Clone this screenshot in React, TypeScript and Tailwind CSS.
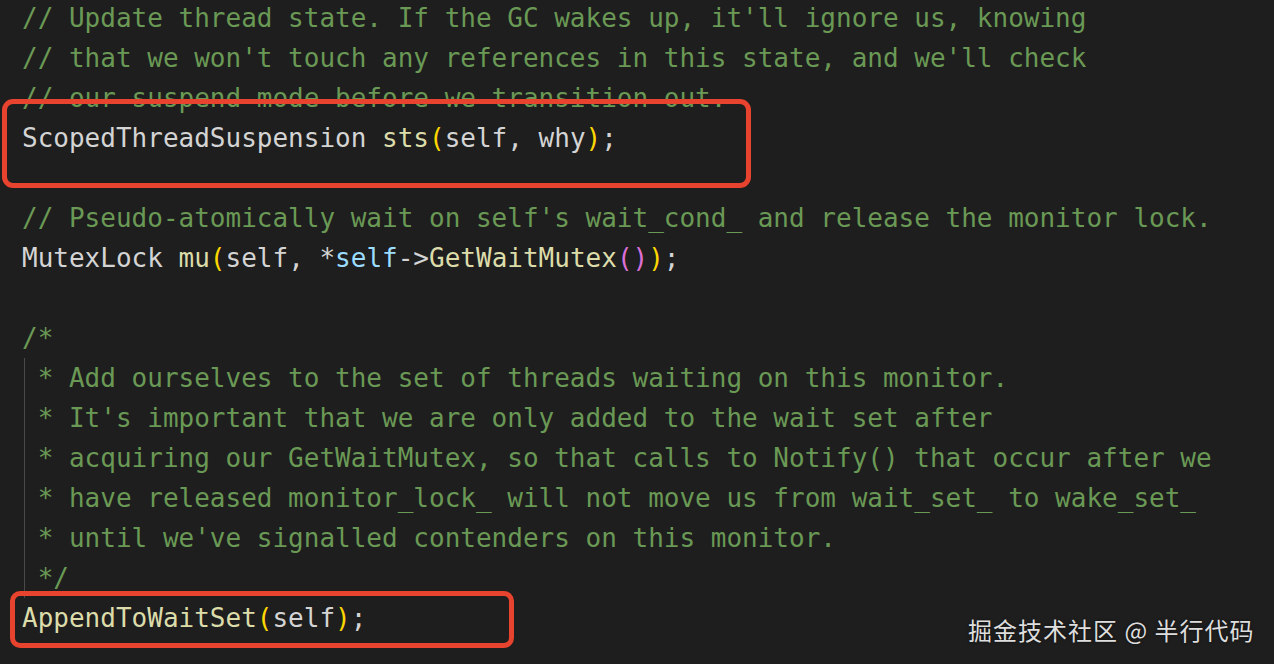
type Tok = { t: string; c?: string };

const GRAY = 'text-[#d4d4d4]';
const CMT = 'text-[#6a9955]';
const FN = 'text-[#dcdcaa]';
const GOLD = 'text-[#ffd700]';
const PURPLE = 'text-[#da70d6]';
const VAR = 'text-[#9cdcfe]';

const lines: { toks: Tok[]; guide?: boolean }[] = [
  { toks: [{ t: "// Update thread state. If the GC wakes up, it'll ignore us, knowing", c: CMT }] },
  { toks: [{ t: "// that we won't touch any references in this state, and we'll check", c: CMT }] },
  { toks: [{ t: '// our suspend mode before we transition out.', c: CMT }] },
  {
    toks: [
      { t: 'ScopedThreadSuspension ' },
      { t: 'sts', c: FN },
      { t: '(', c: GOLD },
      { t: 'self, why' },
      { t: ')', c: GOLD },
      { t: ';' },
    ],
  },
  { toks: [] },
  { toks: [{ t: "// Pseudo-atomically wait on self's wait_cond_ and release the monitor lock.", c: CMT }] },
  {
    toks: [
      { t: 'MutexLock ' },
      { t: 'mu', c: FN },
      { t: '(', c: GOLD },
      { t: 'self, *' },
      { t: 'self', c: VAR },
      { t: '->' },
      { t: 'GetWaitMutex', c: FN },
      { t: '()', c: PURPLE },
      { t: ')', c: GOLD },
      { t: ';' },
    ],
  },
  { toks: [] },
  { toks: [{ t: '/*', c: CMT }] },
  { toks: [{ t: ' * Add ourselves to the set of threads waiting on this monitor.', c: CMT }], guide: true },
  { toks: [{ t: " * It's important that we are only added to the wait set after", c: CMT }], guide: true },
  { toks: [{ t: ' * acquiring our GetWaitMutex, so that calls to Notify() that occur after we', c: CMT }], guide: true },
  { toks: [{ t: ' * have released monitor_lock_ will not move us from wait_set_ to wake_set_', c: CMT }], guide: true },
  { toks: [{ t: " * until we've signalled contenders on this monitor.", c: CMT }], guide: true },
  { toks: [{ t: ' */', c: CMT }], guide: true },
  {
    toks: [
      { t: 'AppendToWaitSet', c: FN },
      { t: '(', c: GOLD },
      { t: 'self' },
      { t: ')', c: GOLD },
      { t: ';' },
    ],
  },
];

export default function App() {
  return (
    <div className="relative w-[1274px] h-[664px] overflow-hidden bg-[#1e1e1e]">
      <div className="-mt-[2px] pl-[22px] flex flex-col font-['DejaVu_Sans_Mono',monospace] text-[26px] leading-[40px]">
        {lines.map((line, i) => (
          <div key={i} className={`relative h-[40px] whitespace-pre ${GRAY}`}>
            {line.guide && <div className="absolute left-[2px] top-0 bottom-0 w-px bg-[#4a4a4a]" />}
            {line.toks.map((tok, j) => (
              <span key={j} className={tok.c ?? GRAY}>
                {tok.t}
              </span>
            ))}
          </div>
        ))}
      </div>

      {/* highlight boxes */}
      <div className="absolute left-[2px] top-[99px] w-[749px] h-[89px] rounded-[11px] border-[5px] border-[#e8432e]" />
      <div className="absolute left-[10px] top-[591px] w-[504px] h-[57px] rounded-[10px] border-[5px] border-[#e8432e]" />

      {/* watermark */}
      <div className="absolute left-[968px] top-[614px] font-['Noto_Sans_CJK_SC',sans-serif] text-[24px] leading-[32px] tracking-[1px] text-[#dedede] [text-shadow:0_0_3px_rgba(0,0,0,0.6)] whitespace-nowrap">
        掘金技术社区 @ 半行代码
      </div>
    </div>
  );
}
